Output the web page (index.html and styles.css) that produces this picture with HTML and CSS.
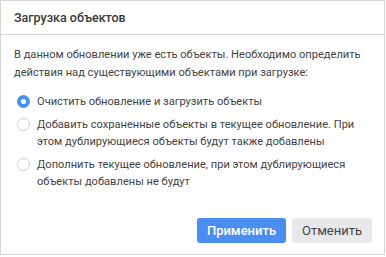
FILE: index.html
```html
<!DOCTYPE html>
<html lang="ru">

<head>
  <meta charset="UTF-8">
  <title>Загрузка объектов</title>
  <link rel="stylesheet" href="styles.css">
</head>

<body>
  <div class="dialog">
    <div class="dialog-header">Загрузка объектов</div>

    <div class="dialog-body">
      <p class="intro">В данном обновлении уже есть объекты. Необходимо определить действия над существующими объектами при загрузке:</p>

      <div class="options">
        <label class="option">
          <span class="radio checked"></span>
          <span class="option-text">Очистить обновление и загрузить объекты</span>
        </label>
        <label class="option">
          <span class="radio"></span>
          <span class="option-text">Добавить сохраненные объекты в текущее обновление. При этом дублирующиеся объекты будут также добавлены</span>
        </label>
        <label class="option">
          <span class="radio"></span>
          <span class="option-text">Дополнить текущее обновление, при этом дублирующиеся объекты добавлены не будут</span>
        </label>
      </div>
    </div>

    <div class="dialog-footer">
      <button class="btn btn-primary">Применить</button>
      <button class="btn btn-secondary">Отменить</button>
    </div>
  </div>
</body>

</html>
```

FILE: styles.css
```css
body {
  margin: 0;
  background-color: white;
  font-family: Roboto, "Liberation Sans", sans-serif;
  color: #444;
}

.dialog {
  width: 383px;
  height: 253px;
  border: 1px solid #d4d4d4;
  display: flex;
  flex-direction: column;
  background-color: white;
}

.dialog-header {
  height: 33px;
  line-height: 33px;
  padding-left: 13px;
  border-bottom: 1px solid #d9d9d9;
  font-size: 12.5px;
  font-weight: 500;
  color: #3a3a3a;
}

.dialog-body {
  flex: 1;
  padding: 11px 10px 0 13px;
}

.intro {
  margin: 0;
  font-size: 11.1px;
  line-height: 18px;
  color: #444;
}

.options {
  margin-top: 11px;
  display: flex;
  flex-direction: column;
  gap: 6px;
}

.option {
  display: flex;
  align-items: flex-start;
  gap: 7px;
  font-size: 11.1px;
  line-height: 17px;
  color: #444;
}

.radio {
  flex: none;
  width: 11px;
  height: 11px;
  margin: 2px 0 0 3px;
  border: 1px solid #cfcfcf;
  border-radius: 50%;
  background-color: white;
  position: relative;
}

.radio.checked {
  border-color: #4a8ef2;
  background-color: #4a8ef2;
}

.radio.checked::after {
  content: "";
  position: absolute;
  left: 3px;
  top: 3px;
  width: 5px;
  height: 5px;
  border-radius: 50%;
  background-color: white;
}

.dialog-footer {
  display: flex;
  justify-content: flex-end;
  gap: 6px;
  padding: 0 12px 11px 0;
}

.btn {
  height: 25px;
  border: none;
  border-radius: 3px;
  font-family: Roboto, "Liberation Sans", sans-serif;
  font-size: 13px;
  padding: 0 8px;
}

.btn-primary {
  width: 89px;
  background-color: #4a8ef2;
  color: white;
  font-weight: 500;
}

.btn-secondary {
  width: 80px;
  background-color: #e7e8ea;
  color: #444;
}
```
